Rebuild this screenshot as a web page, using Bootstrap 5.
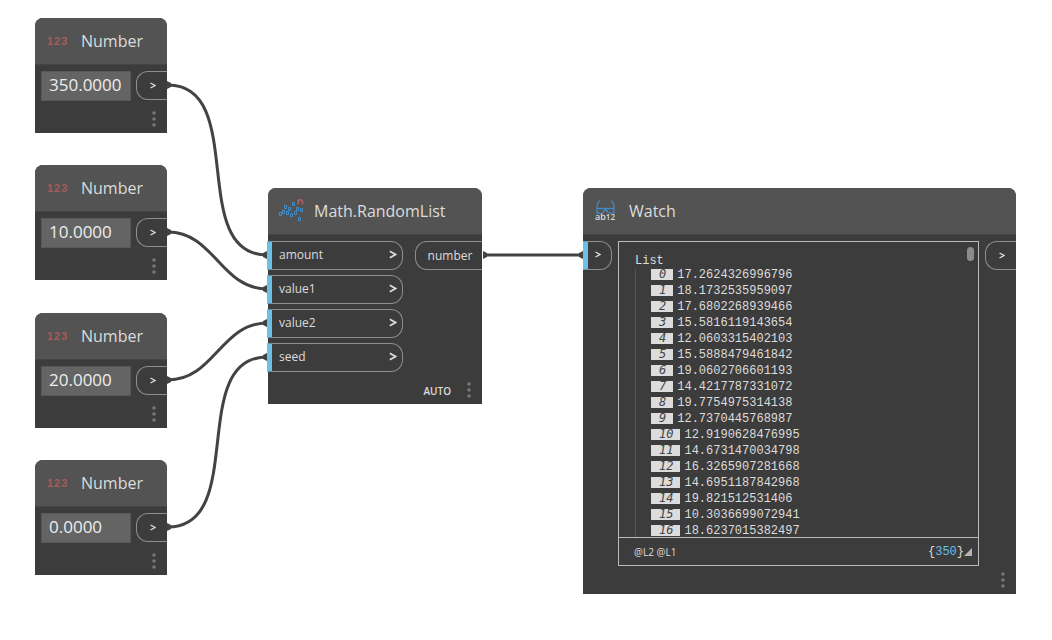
<!DOCTYPE html>
<html lang="en">
<head>
<meta charset="utf-8">
<meta name="viewport" content="width=device-width, initial-scale=1">
<title>Graph workspace</title>
<link href="https://cdn.jsdelivr.net/npm/bootstrap@5.3.0/dist/css/bootstrap.min.css" rel="stylesheet">
<style>
  body { background: #fff; font-family: "Open Sans", "Noto Sans", sans-serif; color: #dcdcdc; }
  .workspace { min-height: 100vh; overflow: hidden; }
  .wires { left: 0; top: 0; width: 100%; height: 100%; pointer-events: none; }
  /* nodes sit at free positions on the canvas */
  .node { background: #3c3c3c; border-radius: 8px 8px 0 0; }
  .node-head { height: 47px; background: #535353; border-radius: 8px 8px 0 0; border-bottom: 1px solid #454545; }
  .node-head h2 { font-size: 16px; line-height: 24px; font-weight: 400; }
  .n1, .n2, .n3, .n4 { left: 35px; width: 132px; height: 115px; }
  .n1 { top: 18px; } .n2 { top: 165px; } .n3 { top: 313px; } .n4 { top: 460px; }
  .n5 { left: 268px; top: 188px; width: 214px; height: 216px; }
  .n6 { left: 583px; top: 188px; width: 433px; height: 406px; }
  .ico { width: 46px; height: 26px; flex: none; }
  .ico-num { color: #a45c5c; font: 700 11px/16px "Liberation Sans", sans-serif; width: 46px; padding-left: 12px; letter-spacing: 1px; }
  .num-row { padding: 6px 0 0 6px; }
  .num-input { width: 90px; height: 30px; background: #646464; border: 1px solid #585858; color: #eee; font-size: 17px; line-height: 24px; padding: 0 6px 4px 7px; border-radius: 0; }
  .port { height: 29px; border: 1px solid #8e8e8e; background: #3c3c3c; color: #dcdcdc; font-size: 12px; line-height: 16px; padding: 0; }
  .port-out { border-right: 0; border-radius: 12px 0 0 12px; }
  .port-in { border-left: 5px solid #6ac0e7; border-radius: 0 12px 12px 0; }
  .port-stack { width: 136px; gap: 5px; margin-left: -1px; }
  .port-stack .port { padding: 0 5px 2px 7px; }
  .chev { width: 6px; height: 7px; fill: none; stroke: #dcdcdc; stroke-width: 1.3; }
  .port-stack .chev { width: 8px; height: 9px; }
  .w-arrow { width: 31px; padding: 0 0 2px 2px; } .w-label { width: 67px; padding-left: 2px; } .w-in { width: 29px; padding: 0 4px 4px 0; }
  .dots { width: 4px; height: 16px; fill: #777; display: block; }
  .more { border: 0; background: none; padding: 0; margin: 0 11px 6px 0; }
  .auto { font-size: 10px; line-height: 18px; font-weight: 600; }
  .wide-body { padding-top: 6px; }
  .viewer { width: 361px; height: 325px; border: 1px solid #bbb; }
  .mono, .rows { font-family: "Liberation Mono", monospace; font-size: 12px; line-height: 16px; }
  .list-pane { height: 296px; overflow: hidden; border-bottom: 1px solid #bbb; padding: 11px 0 0 16px; }
  .rows { border-left: 1px solid #555; padding-left: 15px; }
  .rows li { height: 12px; line-height: 12px; margin-bottom: 4px; }
  .idx { background: #dcdcdc; color: #444; font-family: "DejaVu Sans Mono", monospace; font-style: italic; font-size: 12px; height: 11px; line-height: 11px; padding: 0 7px 0 8px; margin-right: 4px; }
  .thumb { right: 4px; top: 5px; width: 7px; height: 14px; border-radius: 4px; background: #8c8c8c; }
  .viewer-foot { padding: 0 6px 0 15px; }
  .levels { font-family: "Open Sans", sans-serif; font-size: 10px; line-height: 16px; }
  .count { color: #6ac0e7; }
</style>
</head>
<body>
<main class="workspace position-relative">
  <svg class="wires position-absolute" fill="none" stroke="#434343" stroke-width="3" aria-hidden="true">
    <path d="M168 85C248 85 187 255 267 255M168 232C214 232 221 289 267 289M168 380C214 380 221 323 267 323M168 527C248 527 187 357 267 357M484 255H582"/>
    <g fill="#434343" stroke="none">
      <path id="s" d="M167 81l4 2v4l-4 2z"/><use href="#s" y="147"/><use href="#s" y="295"/><use href="#s" y="442"/><use href="#s" x="316" y="170"/>
      <path id="e" d="M267 251l-4 2v4l4 2z"/><use href="#e" y="34"/><use href="#e" y="68"/><use href="#e" y="102"/><use href="#e" x="316"/>
    </g>
  </svg>
  <svg width="0" height="0" class="position-absolute" aria-hidden="true">
    <symbol id="chev" viewBox="0 0 6 7"><path d="M.5 1L5 3.500L.5 6"/></symbol>
    <symbol id="dots" viewBox="0 0 4 16"><circle cx="2" cy="2" r="1.800"/><circle cx="2" cy="8" r="1.800"/><circle cx="2" cy="14" r="1.800"/></symbol>
  </svg>

  <section class="node n1 position-absolute d-flex flex-column">
    <header class="node-head d-flex align-items-center"><span class="ico-num">123</span><h2 class="m-0">Number</h2></header>
    <div class="d-flex justify-content-between num-row"><input class="num-input" aria-label="Number 1" value="350.0000"><button class="port port-out w-arrow" aria-label="Output 1"><svg class="chev"><use href="#chev"/></svg></button></div>
    <button class="more mt-auto align-self-end" aria-label="Options 1"><svg class="dots"><use href="#dots"/></svg></button>
  </section>
  <section class="node n2 position-absolute d-flex flex-column">
    <header class="node-head d-flex align-items-center"><span class="ico-num">123</span><h2 class="m-0">Number</h2></header>
    <div class="d-flex justify-content-between num-row"><input class="num-input" aria-label="Number 2" value="10.0000"><button class="port port-out w-arrow" aria-label="Output 2"><svg class="chev"><use href="#chev"/></svg></button></div>
    <button class="more mt-auto align-self-end" aria-label="Options 2"><svg class="dots"><use href="#dots"/></svg></button>
  </section>
  <section class="node n3 position-absolute d-flex flex-column">
    <header class="node-head d-flex align-items-center"><span class="ico-num">123</span><h2 class="m-0">Number</h2></header>
    <div class="d-flex justify-content-between num-row"><input class="num-input" aria-label="Number 3" value="20.0000"><button class="port port-out w-arrow" aria-label="Output 3"><svg class="chev"><use href="#chev"/></svg></button></div>
    <button class="more mt-auto align-self-end" aria-label="Options 3"><svg class="dots"><use href="#dots"/></svg></button>
  </section>
  <section class="node n4 position-absolute d-flex flex-column">
    <header class="node-head d-flex align-items-center"><span class="ico-num">123</span><h2 class="m-0">Number</h2></header>
    <div class="d-flex justify-content-between num-row"><input class="num-input" aria-label="Number 4" value="0.0000"><button class="port port-out w-arrow" aria-label="Output 4"><svg class="chev"><use href="#chev"/></svg></button></div>
    <button class="more mt-auto align-self-end" aria-label="Options 4"><svg class="dots"><use href="#dots"/></svg></button>
  </section>

  <section class="node n5 position-absolute d-flex flex-column">
    <header class="node-head d-flex align-items-center">
      <svg class="ico" viewBox="0 0 46 26" fill="none" stroke="#3f8ccb" aria-hidden="true">
        <path d="M24.500 4.500h2v3h-2zM16.500 7.500h2v3h-2zM20.500 9.500h2v3h-2zM14.500 12.500h2v3h-2zM11.500 14.500h2v3h-2zM18.500 13.500h2v3h-2zM22.500 15.500h2v3h-2zM28.500 9.500h2v3h-2zM32.500 10.500h2v3h-2zM26.500 13.500h2v3h-2zM30.500 19.500h2v3h-2z"/>
        <path stroke="#a86464" stroke-width="1.500" d="M30.200 6.500V1.500M30.200 3.500q.3-1.800 2.200-1.800t2.100 2v2.800"/>
      </svg>
      <h2 class="m-0">Math.RandomList</h2>
    </header>
    <div class="wide-body d-flex justify-content-between align-items-start">
      <div class="port-stack d-flex flex-column">
        <button class="port port-in d-flex align-items-center justify-content-between">amount<svg class="chev"><use href="#chev"/></svg></button>
        <button class="port port-in d-flex align-items-center justify-content-between">value1<svg class="chev"><use href="#chev"/></svg></button>
        <button class="port port-in d-flex align-items-center justify-content-between">value2<svg class="chev"><use href="#chev"/></svg></button>
        <button class="port port-in d-flex align-items-center justify-content-between">seed<svg class="chev"><use href="#chev"/></svg></button>
      </div>
      <button class="port port-out w-label">number</button>
    </div>
    <footer class="d-flex align-items-end justify-content-end mt-auto"><span class="auto me-3 mb-1">AUTO</span><button class="more" aria-label="RandomList options"><svg class="dots"><use href="#dots"/></svg></button></footer>
  </section>

  <section class="node n6 position-absolute d-flex flex-column">
    <header class="node-head d-flex align-items-center">
      <svg class="ico" viewBox="0 0 46 26" fill="none" aria-hidden="true">
        <path stroke="#4189bd" stroke-width="1.300" d="M17 2.500q-2.800 2-3 7.500v5h5.500l3-4 3 4H31v-5q-.2-5.500-3-7.500M13.500 10.500h18"/>
        <text x="12" y="22" fill="#dcdcdc" stroke="#535353" stroke-width="1.500" paint-order="stroke" font-family="Open Sans, sans-serif" font-size="9" font-weight="600">ab<tspan font-size="8">12</tspan></text>
      </svg>
      <h2 class="m-0">Watch</h2>
    </header>
    <div class="wide-body d-flex justify-content-between align-items-start">
      <button class="port port-in w-in" aria-label="Watch input"><svg class="chev"><use href="#chev"/></svg></button>
      <div class="viewer d-flex flex-column">
        <div class="list-pane position-relative">
          <div class="mono">List</div>
          <ol class="rows list-unstyled m-0">
            <li class="d-flex"><span class="idx">0</span>17.2624326996796</li>
            <li class="d-flex"><span class="idx">1</span>18.1732535959097</li>
            <li class="d-flex"><span class="idx">2</span>17.6802268939466</li>
            <li class="d-flex"><span class="idx">3</span>15.5816119143654</li>
            <li class="d-flex"><span class="idx">4</span>12.0603315402103</li>
            <li class="d-flex"><span class="idx">5</span>15.5888479461842</li>
            <li class="d-flex"><span class="idx">6</span>19.0602706601193</li>
            <li class="d-flex"><span class="idx">7</span>14.4217787331072</li>
            <li class="d-flex"><span class="idx">8</span>19.7754975314138</li>
            <li class="d-flex"><span class="idx">9</span>12.7370445768987</li>
            <li class="d-flex"><span class="idx">10</span>12.9190628476995</li>
            <li class="d-flex"><span class="idx">11</span>14.6731470034798</li>
            <li class="d-flex"><span class="idx">12</span>16.3265907281668</li>
            <li class="d-flex"><span class="idx">13</span>14.6951187842968</li>
            <li class="d-flex"><span class="idx">14</span>19.821512531406</li>
            <li class="d-flex"><span class="idx">15</span>10.3036699072941</li>
            <li class="d-flex"><span class="idx">16</span>18.6237015382497</li>
          </ol>
          <div class="thumb position-absolute"></div>
        </div>
        <div class="viewer-foot d-flex flex-fill align-items-center justify-content-between">
          <span class="levels">@L2 @L1</span>
          <span class="mono d-flex align-items-center">{<span class="count">350</span>}<svg width="8" height="8" fill="#b5b5b5" aria-hidden="true"><path d="M8 0v8H0z"/></svg></span>
        </div>
      </div>
      <button class="port port-out w-arrow" aria-label="Watch output"><svg class="chev"><use href="#chev"/></svg></button>
    </div>
    <button class="more mt-auto align-self-end" aria-label="Watch options"><svg class="dots"><use href="#dots"/></svg></button>
  </section>
</main>
<script src="https://cdn.jsdelivr.net/npm/bootstrap@5.3.0/dist/js/bootstrap.bundle.min.js"></script>
</body>
</html>
